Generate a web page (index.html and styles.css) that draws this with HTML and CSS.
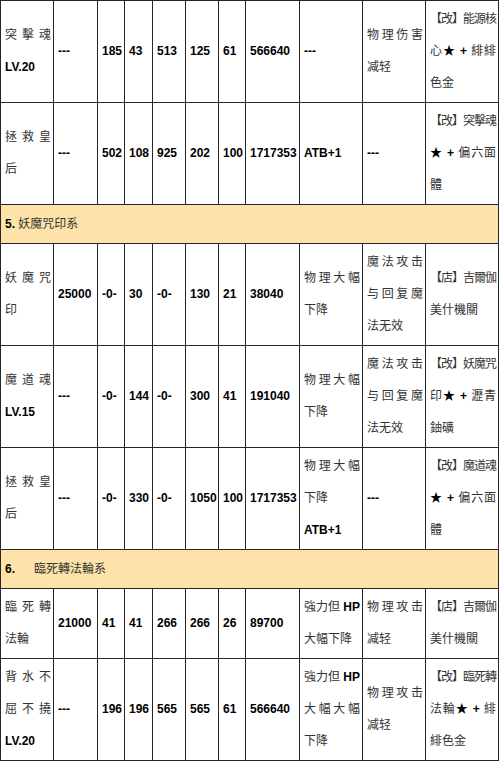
FILE: index.html
```html
<!DOCTYPE html>
<html lang="zh">
<head>
<meta charset="utf-8">
<title>table</title>
<link rel="stylesheet" href="styles.css">
</head>
<body>
<table class="sheet">
  <colgroup>
    <col class="w1"><col class="w2"><col class="w3"><col class="w4"><col class="w5"><col class="w6"><col class="w7"><col class="w8"><col class="w9"><col class="w10"><col class="w11">
  </colgroup>
  <tr>
    <td><span class="j">突擊魂</span><b>LV.20</b></td>
    <td class="n">---</td><td class="n">185</td><td class="n">43</td><td class="n">513</td><td class="n">125</td><td class="n">61</td><td class="n">566640</td>
    <td class="n">---</td>
    <td><span class="j">物理伤害</span>减轻</td>
    <td><span class="j k">【改】能源核</span><span class="j">心<b>★ +</b> 緋緋</span>色金</td>
  </tr>
  <tr>
    <td><span class="j">拯救皇</span>后</td>
    <td class="n">---</td><td class="n">502</td><td class="n">108</td><td class="n">925</td><td class="n">202</td><td class="n">100</td><td class="n">1717353</td>
    <td class="n">ATB+1</td>
    <td class="n">---</td>
    <td><span class="j k">【改】突擊魂</span><span class="j"><b>★ +</b> 偏六面</span>體</td>
  </tr>
  <tr class="sec">
    <td colspan="11"><b>5.</b> 妖魔咒印系</td>
  </tr>
  <tr>
    <td><span class="j">妖魔咒</span>印</td>
    <td class="n">25000</td><td class="n">-0-</td><td class="n">30</td><td class="n">-0-</td><td class="n">130</td><td class="n">21</td><td class="n">38040</td>
    <td><span class="j">物理大幅</span>下降</td>
    <td><span class="j">魔法攻击</span><span class="j">与回复魔</span>法无效</td>
    <td><span class="j k">【店】吉爾伽</span>美什機關</td>
  </tr>
  <tr>
    <td><span class="j">魔道魂</span><b>LV.15</b></td>
    <td class="n">---</td><td class="n">-0-</td><td class="n">144</td><td class="n">-0-</td><td class="n">300</td><td class="n">41</td><td class="n">191040</td>
    <td><span class="j">物理大幅</span>下降</td>
    <td><span class="j">魔法攻击</span><span class="j">与回复魔</span>法无效</td>
    <td><span class="j k">【改】妖魔咒</span><span class="j">印<b>★ +</b> 瀝青</span>鈾礦</td>
  </tr>
  <tr>
    <td><span class="j">拯救皇</span>后</td>
    <td class="n">---</td><td class="n">-0-</td><td class="n">330</td><td class="n">-0-</td><td class="n">1050</td><td class="n">100</td><td class="n">1717353</td>
    <td><span class="j">物理大幅</span>下降<br><b>ATB+1</b></td>
    <td class="n">---</td>
    <td><span class="j k">【改】魔道魂</span><span class="j"><b>★ +</b> 偏六面</span>體</td>
  </tr>
  <tr class="sec">
    <td colspan="11"><b>6.</b><span class="gap"></span>臨死轉法輪系</td>
  </tr>
  <tr>
    <td><span class="j">臨死轉</span>法輪</td>
    <td class="n">21000</td><td class="n">41</td><td class="n">41</td><td class="n">266</td><td class="n">266</td><td class="n">26</td><td class="n">89700</td>
    <td><span class="j">強力但 <b>HP</b></span>大幅下降</td>
    <td><span class="j">物理攻击</span>减轻</td>
    <td><span class="j k">【店】吉爾伽</span>美什機關</td>
  </tr>
  <tr>
    <td><span class="j">背水不</span><span class="j">屈不撓</span><b>LV.20</b></td>
    <td class="n">---</td><td class="n">196</td><td class="n">196</td><td class="n">565</td><td class="n">565</td><td class="n">61</td><td class="n">566640</td>
    <td><span class="j">強力但 <b>HP</b></span><span class="j">大幅大幅</span>下降</td>
    <td><span class="j">物理攻击</span>减轻</td>
    <td><span class="j k">【改】臨死轉</span><span class="j">法輪<b>★ +</b> 緋</span>緋色金</td>
  </tr>
</table>
</body>
</html>
```

FILE: styles.css
```css
html, body {
  margin: 0;
  padding: 0;
  background: #ffffff;
}

.sheet {
  border-collapse: collapse;
  table-layout: fixed;
  width: 499px;
  font-family: "Liberation Sans", "Noto Sans CJK SC", sans-serif;
  font-size: 12px;
  line-height: 32px;
  color: #333333;
}

.w1 { width: 53px; }
.w2 { width: 44px; }
.w3 { width: 27px; }
.w4 { width: 28px; }
.w5 { width: 33px; }
.w6 { width: 33px; }
.w7 { width: 27px; }
.w8 { width: 54px; }
.w9 { width: 63px; }
.w10 { width: 63px; }
.w11 { width: 73px; }

.sheet td {
  border: 1px solid #262626;
  padding: 2px 2px 3px 4px;
  vertical-align: middle;
  text-align: left;
  overflow: hidden;
}

.sheet tr.sec td {
  padding-top: 3px;
  padding-bottom: 3px;
}

.n {
  font-weight: bold;
  color: #000;
}

.sheet b {
  font-weight: bold;
  color: #000;
}

.j {
  display: block;
  text-align: justify;
  text-align-last: justify;
}

.k {
  letter-spacing: -1px;
}

.sec td {
  background: #fde3a9;
}

.gap {
  display: inline-block;
  width: 19px;
}
```
